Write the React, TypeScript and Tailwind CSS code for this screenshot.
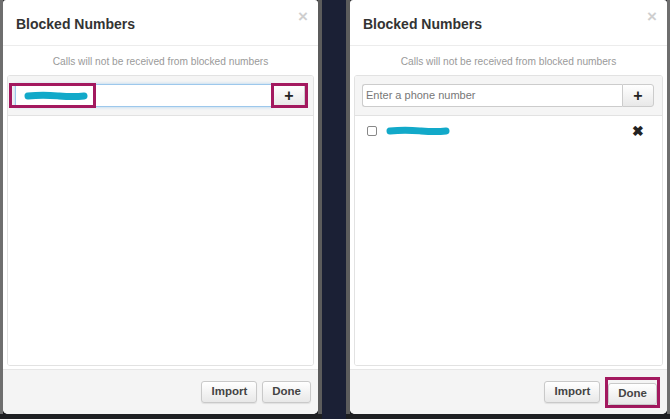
import React from "react";

const font = { fontFamily: '"Liberation Sans", Arial, sans-serif' };

function Scribble({ w }: { w: number }) {
  return (
    <svg width={w} height="10" viewBox={`0 0 ${w} 10`}>
      <path
        d={`M4 5 C ${w * 0.3} 3.5, ${w * 0.45} 4.5, ${w * 0.55} 5 S ${w * 0.8} 6, ${w - 4} 5`}
        stroke="#12a9c9"
        strokeWidth="7"
        strokeLinecap="round"
        fill="none"
      />
    </svg>
  );
}

function FooterButton({ label }: { label: string }) {
  return (
    <button className="h-[22px] px-[9px] rounded-[3px] border border-[#c9c9c9] bg-gradient-to-b from-white to-[#e8e8e8] text-[11.5px] font-bold text-[#444] shadow-[0_1px_1px_rgba(0,0,0,0.08)]">
      {label}
    </button>
  );
}

function Panel({ variant }: { variant: "left" | "right" }) {
  const left = variant === "left";
  return (
    <div className="w-full h-[414px] bg-white rounded-b-[5px] rounded-t-[3px] flex flex-col overflow-hidden" style={font}>
      {/* Header */}
      <div className="h-[46px] shrink-0 border-b border-[#ececec] flex items-start justify-between pl-[13px] pr-[10px]">
        <h2 className="text-[14px] font-bold text-[#333] mt-[14px]">Blocked Numbers</h2>
        <span className="text-[17px] font-bold text-[#cfcfcf] leading-none mt-[8px]">×</span>
      </div>

      {/* Subtitle */}
      <p className="text-center text-[10.2px] text-[#9a9a9a] mt-[8px] h-[21px]">
        Calls will not be received from blocked numbers
      </p>

      {/* Well */}
      <div className="mx-[4px] flex-1 border border-[#e2e2e2] rounded-[3px] flex flex-col overflow-hidden">
        <div className="h-[40px] shrink-0 bg-[#f5f5f5] border-b border-[#e2e2e2] flex items-center pl-[7px] pr-[8px] relative">
          {left ? (
            <>
              <div className="flex-1 h-[23px] border border-[#9dc8ec] bg-white shadow-[0_0_3px_rgba(102,175,233,0.5)] flex items-center pl-[8px]">
                <Scribble w={64} />
              </div>
              <div className="w-[32px] h-[23px] border border-[#ccc] bg-gradient-to-b from-white to-[#e8e8e8] flex items-center justify-center text-[16px] font-bold text-[#222]">
                +
              </div>
              <div className="absolute left-[1px] top-[7px] w-[87px] h-[25px] border-[3px] border-[#a3195f]" />
              <div className="absolute right-[5px] top-[7px] w-[37px] h-[25px] border-[3px] border-[#a3195f]" />
            </>
          ) : (
            <>
              <div className="flex-1 h-[23px] border border-[#ccc] border-r-0 rounded-l-[3px] bg-white flex items-center pl-[3px] text-[11px] text-[#777]">
                Enter a phone number
              </div>
              <div className="w-[32px] h-[23px] border border-[#ccc] rounded-r-[3px] bg-gradient-to-b from-white to-[#e8e8e8] flex items-center justify-center text-[16px] font-bold text-[#222]">
                +
              </div>
            </>
          )}
        </div>
        <div className="flex-1 bg-white">
          {!left && (
            <div className="flex items-center h-[30px] pl-[12px] pr-[18px]">
              <span className="w-[10px] h-[10px] border border-[#888] rounded-[2px] bg-white" />
              <span className="ml-[9px]">
                <Scribble w={64} />
              </span>
              <span className="ml-auto text-[14px] font-bold text-[#222] leading-none">✖</span>
            </div>
          )}
        </div>
      </div>

      {/* Footer */}
      <div className="h-[45px] mt-[3px] shrink-0 bg-[#f4f4f4] border-t border-[#e6e6e6] flex items-center justify-end gap-[5px] pr-[7px] pb-[1px]">
        <FooterButton label="Import" />
        {left ? (
          <FooterButton label="Done" />
        ) : (
          <div className="border-[3px] border-[#a3195f] mt-[2px]">
            <FooterButton label="Done" />
          </div>
        )}
      </div>
    </div>
  );
}

export default function App() {
  return (
    <div className="w-[670px] h-[419px] bg-[#1e1f22] flex overflow-hidden">
      <div className="w-[3px] h-[414px] bg-[#6e6e6e]" />
      <div className="w-[315px] shrink-0">
        <Panel variant="left" />
      </div>
      <div className="w-[4px] h-[414px] bg-[#5c5c5c]" />
      <div className="w-[24px] h-full bg-[#1b2035]" />
      <div className="w-[4px] h-[414px] bg-[#5c5c5c]" />
      <div className="w-[317px] shrink-0">
        <Panel variant="right" />
      </div>
      <div className="w-[3px] h-[414px] bg-[#6e6e6e]" />
    </div>
  );
}
